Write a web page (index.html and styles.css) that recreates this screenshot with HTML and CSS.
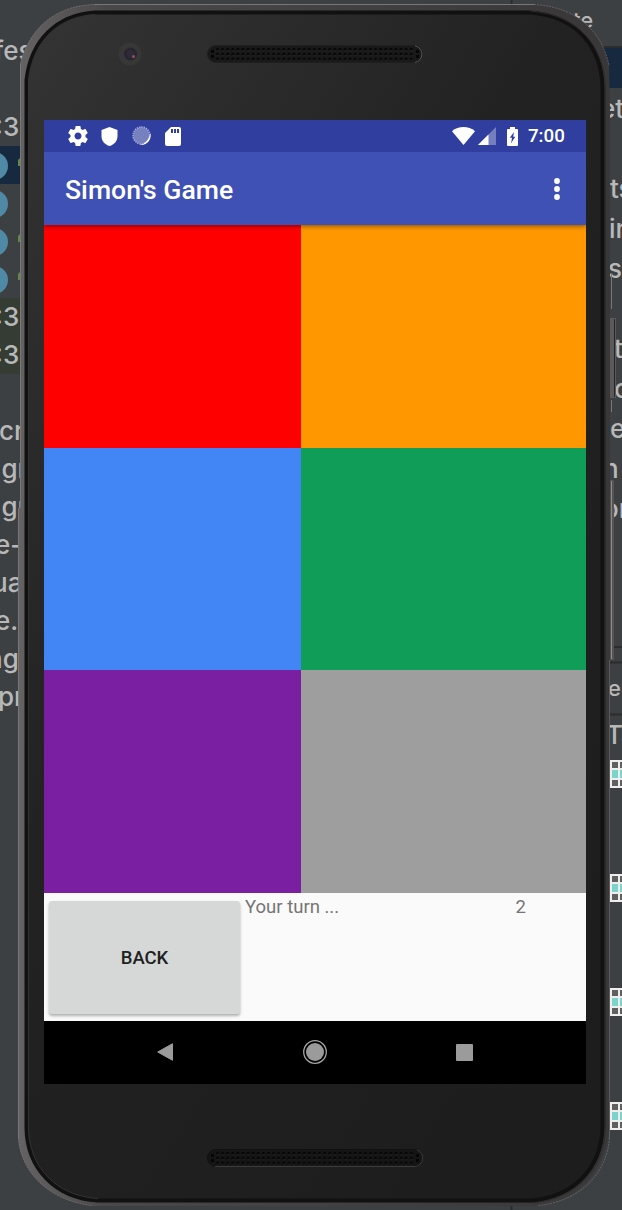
FILE: index.html
```html
<!DOCTYPE html>
<html lang="en">
<head>
<meta charset="utf-8">
<title>Simon's Game</title>
<link rel="stylesheet" href="styles.css">
</head>
<body>
<div class="desktop">
  <svg class="backdrop" width="622" height="1210" viewBox="0 0 622 1210" aria-hidden="true">
    <defs>
      <g id="cell">
        <path fill="#eeeeee" d="M0 0h14v28H0z"/>
        <path fill="#606060" d="M2 2h6v6H2zM10 2h4v6h-4zM2 20h6v6H2zM10 20h4v6h-4z"/>
        <path fill="#7bd3c9" d="M2 10h6v8H2zM10 10h4v8h-4z"/>
      </g>
    </defs>
    <!-- editor pane, left -->
    <rect class="selected" x="0" y="146" width="24" height="38"/>
    <rect class="changed" x="0" y="298" width="24" height="76"/>
    <g fill="#5089a5">
      <circle cx="-6" cy="166" r="14"/><circle cx="-6" cy="204" r="14"/>
      <circle cx="-6" cy="242" r="14"/><circle cx="-6" cy="280" r="14"/>
    </g>
    <g fill="#64864d">
      <path d="M18 166v-6l2-2h2v8zM18 242v-6l2-2h2v8zM18 280v-6l2-2h2v8z"/>
    </g>
    <g class="code">
      <text x="-6" y="60">fes</text>
      <text x="-5" y="136">:3.</text>
      <text x="-5" y="326">:3.</text>
      <text x="-5" y="364">:3.</text>
      <text x="-1" y="440">cr</text>
      <text x="1.500" y="478">gr</text>
      <text x="1.500" y="516">gr</text>
      <text x="-5" y="554">e-</text>
      <text x="-8" y="592">ua</text>
      <text x="-5" y="630">e.</text>
      <text x="-13" y="668">ng</text>
      <text x="-2" y="706">pr</text>
    </g>
    <!-- editor pane, right -->
    <rect class="selected" x="600" y="48" width="22" height="40"/>
    <path class="rule" d="M511.500 0V6M511.500 1204V1210M600 47H622M600 647H622M600 662.500H622M600 714.500H622"/>
    <g class="code">
      <text class="small" x="547" y="28">date</text>
      <text x="600" y="118">et</text>
      <text x="610" y="198">ts</text>
      <text x="609" y="238">in</text>
      <text x="608" y="278">s</text>
      <text x="614" y="358">t</text>
      <text x="614" y="398">o</text>
      <text x="610" y="438">e</text>
      <text x="603" y="478">n</text>
      <text x="603" y="518">or</text>
      <text class="small" x="608" y="696">er</text>
      <text x="606" y="744">Ta</text>
    </g>
    <use href="#cell" x="610" y="760"/>
    <use href="#cell" x="610" y="874"/>
    <use href="#cell" x="610" y="988"/>
    <use href="#cell" x="610" y="1102"/>
    <!-- phone shell and side buttons -->
    <path fill="#777" d="M611 274h1v35h-1zM611 400h1v12h-1z"/>
    <rect x="608" y="318" width="8" height="80" fill="#5b595a"/>
    <path fill="#252525" d="M614 319h1v78h-1z"/>
    <rect x="608" y="480" width="6" height="180" fill="#555354"/>
    <path fill="#8a8888" d="M611 481h1v178h-1z"/>
    <defs>
      <linearGradient id="rim" x1="0" x2="1" y1="0" y2="0">
        <stop offset="0" stop-color="#656263"/><stop offset=".15" stop-color="#4a4848"/><stop offset="1" stop-color="#393738"/>
      </linearGradient>
      <linearGradient id="face" x1="0" x2=".75" y1="0" y2="1">
        <stop offset="0" stop-color="#343434"/><stop offset=".45" stop-color="#222"/><stop offset="1" stop-color="#1d1d1d"/>
      </linearGradient>
    </defs>
    <path fill="url(#rim)" d="M94 4H534C579 7 603 34 609 66L610 110V1120C609 1166 582 1201 538 1206H92C51 1201 21 1174 18 1138V508H20V64C29 30 53 6 94 4Z"/>
    <path fill="none" stroke="#777" d="M94 4.500H534M18.500 508V1138M20.500 64V508"/>
    <path fill="none" stroke="#747273" stroke-dasharray="2 1" opacity=".7" d="M20.500 64C29 30 53 6 94 4.500M534 4.500C579 7 603 34 609 66M609.500 1138C607 1172 582 1201 538 1205.500M18.500 1138C21 1174 51 1201 92 1205.500"/>
    <path fill="none" stroke="#7a7878" opacity=".55" d="M609.500 660V1138"/>
    <path fill="url(#face)" stroke="#111" stroke-width="4" d="M95 12.500H530C578 16 602 48 602.500 88V1128C601 1168 575 1196 532 1200.500H98C55 1198 27 1168 26.500 1128V80C31 40 57 15 95 12.500Z"/>
    <path fill="none" stroke="#333" d="M98 1198.500C56 1196 29 1167 28.500 1128V80C33 41 58 16.500 95 14.500"/>
    <path fill="none" stroke="#2c2b2b" d="M530 11C579 14.500 605 48 605.500 88V1128C604 1169 577 1199 532 1203"/>
  </svg>

  <main class="phone">
    <header class="forehead">
      <svg class="camera" viewBox="0 0 24 24">
        <circle cx="12" cy="12" r="11.500" fill="#373737"/>
        <circle cx="12.500" cy="12" r="6.500" fill="#29252f"/>
        <circle cx="12.500" cy="12" r="4" fill="#30293a"/>
        <circle cx="15.500" cy="14.500" r="1.500" fill="#92535d"/>
      </svg>
      <svg class="grille" viewBox="0 0 216 18">
        <defs><pattern id="holes" x="8" y="2" width="5.1" height="4.900" patternUnits="userSpaceOnUse">
          <circle cx="2.500" cy="2.200" r="1.400" fill="#050505"/><path d="M2 3.600h1.500" stroke="#343434" stroke-width=".6"/>
        </pattern></defs>
        <rect x=".5" y=".5" width="215" height="17" rx="8.500" fill="#191919" stroke="#1f1f1f"/>
        <path fill="none" stroke="#555" d="M208 .8a8.500 8.500 0 0 1 0 16.700"/>
        <rect x="8" y="2" width="199.500" height="14.700" fill="url(#holes)"/>
        <path fill="#050505" d="M4 5h3v3H4zM4 10h3v3H4zM209 5h3v3h-3zM209 10h3v3h-3z"/>
      </svg>
    </header>

    <section class="screen">
      <div class="status-bar">
        <svg class="gear" viewBox="2 2 20 20"><path fill="#fff" d="M19.430 12.980c.04-.32.07-.64.07-.98s-.03-.66-.07-.98l2.110-1.650c.19-.15.24-.42.12-.64l-2-3.460c-.12-.22-.39-.3-.61-.22l-2.490 1c-.52-.4-1.080-.73-1.690-.98l-.38-2.650C14.460 2.180 14.250 2 14 2h-4c-.25 0-.46.18-.49.42l-.38 2.650c-.61.25-1.170.59-1.690.98l-2.490-1c-.23-.09-.49 0-.61.22l-2 3.460c-.13.22-.07.49.12.64l2.110 1.650c-.04.32-.07.65-.07.98s.03.66.07.98l-2.110 1.650c-.19.15-.24.42-.12.64l2 3.460c.12.22.39.3.61.22l2.490-1c.52.4 1.080.73 1.690.98l.38 2.650c.03.24.24.42.49.42h4c.25 0 .46-.18.49-.42l.38-2.650c.61-.25 1.170-.59 1.690-.98l2.490 1c.23.09.49 0 .61-.22l2-3.460c.12-.22.07-.49-.12-.64l-2.110-1.650zM12 15.500c-1.930 0-3.500-1.570-3.500-3.500s1.570-3.500 3.500-3.500 3.500 1.570 3.500 3.500-1.570 3.500-3.500 3.500z"/></svg>
        <svg class="shield" viewBox="0 0 17 19"><path fill="#fff" d="M8.500 0 16.500 3V9c0 5-3.300 8.700-8 10C3.800 17.700.5 14 .5 9V3z"/></svg>
        <svg class="sync" viewBox="0 0 20 20"><circle cx="9.500" cy="9.500" r="8" fill="#7781c0"/><circle cx="9.500" cy="9.500" r="8.400" fill="none" stroke="#a5acd7" stroke-width="1.600" stroke-dasharray="1.500 .8"/><path fill="#fff" d="M18.300 7c1.600 6.500-3.300 12.500-10.300 11.900 5.500-1.400 9-5 10.300-11.900z"/></svg>
        <svg class="sd" viewBox="0 0 16 19"><path fill="#fff" fill-rule="evenodd" d="M6 0h8a2 2 0 0 1 2 2v15a2 2 0 0 1-2 2H2a2 2 0 0 1-2-2V6zM6 2v4h2V2zM9 2v4h2V2zM12 2v4h2V2z"/></svg>
        <svg class="wifi" viewBox="0 0 23 18"><path fill="#fff" d="M0 4.200C6.500-1.400 16.500-1.400 23 4.200L11.500 18z"/></svg>
        <svg class="signal" viewBox="0 0 18 18"><path fill="#757fbe" d="M18 0v18H0z"/><path fill="#fff" d="M10.500 7.500V18H0z"/></svg>
        <svg class="battery" viewBox="0 0 11 19"><path fill="#fff" fill-rule="evenodd" d="M3 0h5v2h2a1 1 0 0 1 1 1v15a1 1 0 0 1-1 1H1a1 1 0 0 1-1-1V3a1 1 0 0 1 1-1h2zM7 5 2.800 10.800H5L4.200 16 8.300 9.800H6.200z"/></svg>
        <span class="clock">7:00</span>
      </div>
      <div class="app-bar">
        <h1 class="title">Simon's Game</h1>
        <svg class="more" viewBox="0 0 6 22"><g fill="#fff"><circle cx="3" cy="3" r="2.900"/><circle cx="3" cy="11" r="2.900"/><circle cx="3" cy="19" r="2.900"/></g></svg>
      </div>
      <div class="board">
        <div class="pad red"></div><div class="pad orange"></div>
        <div class="pad blue"></div><div class="pad green"></div>
        <div class="pad purple"></div><div class="pad gray"></div>
      </div>
      <div class="controls">
        <button class="back">BACK</button>
        <span class="message">Your turn ...</span>
        <span class="score">2</span>
      </div>
      <nav class="nav-bar">
        <svg class="nav-back" viewBox="0 0 16 18"><path fill="#9b9b9b" stroke="#9b9b9b" stroke-linejoin="round" d="M15.500.7v16.600L.7 9z"/></svg>
        <svg class="nav-home" viewBox="0 0 24 24"><circle cx="12" cy="12" r="11.300" fill="none" stroke="#a5a5a5" stroke-width="1.300"/><circle cx="12" cy="12" r="9" fill="#9b9b9b"/></svg>
        <svg class="nav-recent" viewBox="0 0 17 17"><rect width="17" height="17" rx="1" fill="#9b9b9b"/></svg>
      </nav>
    </section>

    <footer class="chin">
      <svg class="grille" viewBox="0 0 216 18">
        <rect x=".5" y=".5" width="215" height="17" rx="8.500" fill="#151515" stroke="#111"/>
        <path fill="none" stroke="#3c3c3c" d="M8 17.500H208A8.500 8.500 0 0 0 210 1"/>
        <rect x="8" y="2" width="199.500" height="14.700" fill="url(#holes)"/>
        <path fill="#050505" d="M4 5h3v3H4zM4 10h3v3H4zM209 5h3v3h-3zM209 10h3v3h-3z"/>
      </svg>
    </footer>
  </main>
</div>
</body>
</html>
```

FILE: styles.css
```css
* { box-sizing: border-box; }
body { margin: 0; font-family: Roboto, sans-serif; }
svg { display: block; flex: none; }

.desktop {
  position: relative;
  width: 622px;
  height: 1210px;
  overflow: hidden;
  background: #3c4043;
}
.backdrop { position: absolute; inset: 0; }
.selected { fill: #16293f; }
.changed { fill: #353c34; }
.rule { fill: none; stroke: #2b2c2d; stroke-width: 2; }
.code { font: 500 26px Inter, sans-serif; fill: #b8b8b8; }
.small { font-size: 22px; }

.phone {
  position: relative;
  display: flex;
  flex-direction: column;
  width: 542px;
  height: 1210px;
  margin-left: 44px;
}
.forehead { display: flex; height: 120px; padding: 42px 0 0 74px; }
.camera { width: 24px; height: 24px; }
.grille { width: 216px; height: 18px; }
.forehead .grille { margin: 3px 0 0 65px; }
.chin { padding: 65px 0 0 163px; }

.screen { display: flex; flex-direction: column; height: 964px; }
.status-bar {
  display: flex;
  align-items: center;
  height: 32px;
  padding: 0 21px 0 24px;
  background: #303f9f;
}
.gear { width: 20px; height: 20px; }
.shield { width: 17px; height: 19px; margin-left: 13px; }
.sync { width: 20px; height: 20px; margin-left: 14px; }
.sd { width: 16px; height: 19px; margin-left: 13px; }
.wifi { width: 23px; height: 18px; margin-left: auto; }
.signal { width: 18px; height: 18px; margin-left: 3px; }
.battery { width: 11px; height: 19px; margin-left: 11px; }
.clock { width: 37px; margin-left: 10px; font-size: 18.700px; font-weight: 500; line-height: 32px; color: #fff; }

.app-bar {
  position: relative;
  display: flex;
  align-items: center;
  justify-content: space-between;
  height: 73px;
  padding: 0 26px 0 21px;
  background: #3f51b5;
  box-shadow: 0 1px 5px rgba(0, 0, 0, .5);
  clip-path: inset(0 0 -8px 0);
}
.title { margin: 2px 0 0; font-size: 26.600px; font-weight: 500; line-height: 32px; color: #fff; }
.more { width: 6px; height: 22px; }

.board { display: grid; grid-template: 223px 222px 223px / 257px 1fr; }
.red { background: #f00; }
.orange { background: #ff9800; }
.blue { background: #4285f4; }
.green { background: #0f9d58; }
.purple { background: #7b1fa2; }
.gray { background: #9e9e9e; }

.controls {
  display: flex;
  height: 128px;
  padding: 0 60px 0 5px;
  background: #fafafa;
  color: #757575;
  font-size: 18.500px;
  line-height: 22px;
}
.back {
  width: 191px;
  height: 113px;
  margin-top: 8px;
  padding: 0;
  border: 0;
  border-radius: 3px;
  background: #d6d8d7;
  box-shadow: 0 2px 3px rgba(0, 0, 0, .3);
  color: #212121;
  font: 500 18.500px Roboto, sans-serif;
}
.message { margin: 3px 0 0 5px; }
.score { margin: 3px 0 0 auto; }

.nav-bar {
  display: flex;
  align-items: center;
  height: 63px;
  padding: 0 0 1px 113px;
  background: #000;
}
.nav-back { width: 16px; height: 18px; }
.nav-home { width: 24px; height: 24px; margin-left: 130px; }
.nav-recent { width: 17px; height: 17px; margin-left: 129px; }
```
